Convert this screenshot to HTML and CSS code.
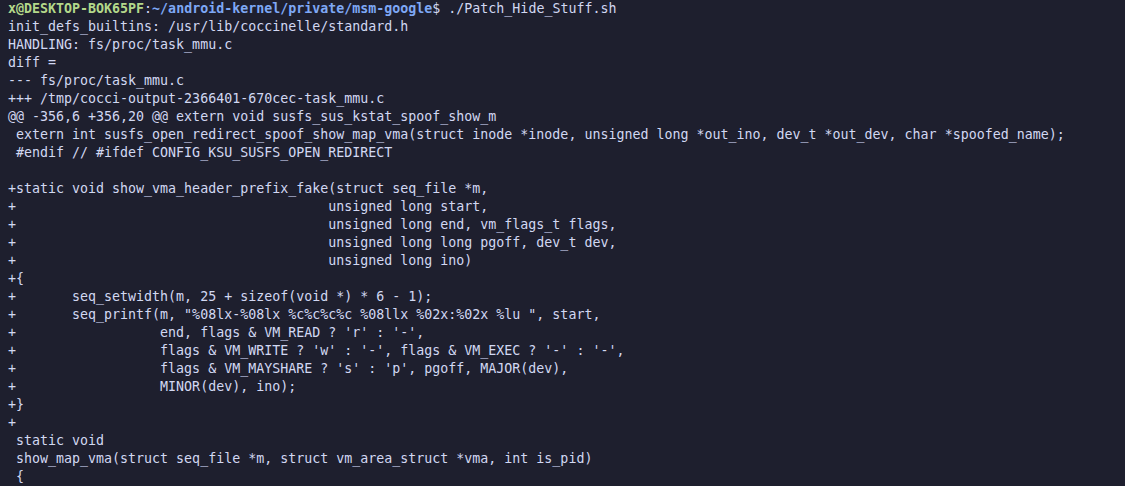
FILE: index.html
```html
<!DOCTYPE html>
<html>
<head>
<meta charset="utf-8">
<link rel="stylesheet" href="styles.css">
</head>
<body>
<pre class="term"><span class="user">x@DESKTOP-BOK65PF</span>:<span class="path">~/android-kernel/private/msm-google</span>$ ./Patch_Hide_Stuff.sh
init_defs_builtins: /usr/lib/coccinelle/standard.h
HANDLING: fs/proc/task_mmu.c
diff = 
--- fs/proc/task_mmu.c
+++ /tmp/cocci-output-2366401-670cec-task_mmu.c
@@ -356,6 +356,20 @@ extern void susfs_sus_kstat_spoof_show_m
 extern int susfs_open_redirect_spoof_show_map_vma(struct inode *inode, unsigned long *out_ino, dev_t *out_dev, char *spoofed_name);
 #endif // #ifdef CONFIG_KSU_SUSFS_OPEN_REDIRECT

+static void show_vma_header_prefix_fake(struct seq_file *m,
+                                       unsigned long start,
+                                       unsigned long end, vm_flags_t flags,
+                                       unsigned long long pgoff, dev_t dev,
+                                       unsigned long ino)
+{
+       seq_setwidth(m, 25 + sizeof(void *) * 6 - 1);
+       seq_printf(m, "%08lx-%08lx %c%c%c%c %08llx %02x:%02x %lu ", start,
+                  end, flags &amp; VM_READ ? 'r' : '-',
+                  flags &amp; VM_WRITE ? 'w' : '-', flags &amp; VM_EXEC ? '-' : '-',
+                  flags &amp; VM_MAYSHARE ? 's' : 'p', pgoff, MAJOR(dev),
+                  MINOR(dev), ino);
+}
+
 static void
 show_map_vma(struct seq_file *m, struct vm_area_struct *vma, int is_pid)
 {</pre>
</body>
</html>
```

FILE: styles.css
```css
html, body {
  margin: 0;
  padding: 0;
  background: #1e1f2e;
  height: 100%;
  overflow: hidden;
}

.term {
  margin: 0;
  padding: 0 8px;
  font-family: "DejaVu Sans Mono", "Liberation Mono", monospace;
  font-size: 13.3px;
  line-height: 18px;
  color: #d2d8f2;
  white-space: pre;
  tab-size: 8;
}

.user {
  color: #b4d88a;
  font-weight: bold;
}

.path {
  color: #7ea8f5;
  font-weight: bold;
}
```
